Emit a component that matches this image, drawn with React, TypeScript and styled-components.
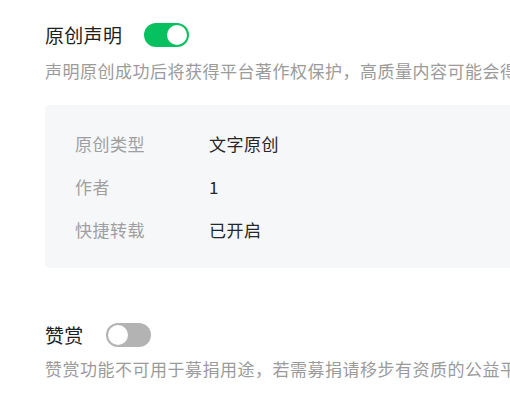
import React from "react";
import styled, { createGlobalStyle } from "styled-components";

const Global = createGlobalStyle`
  html, body {
    margin: 0;
    padding: 0;
    background: #ffffff;
    overflow: hidden;
  }
  body {
    font-family: "Noto Sans CJK SC", "Noto Sans", sans-serif;
  }
`;

const Page = styled.div`
  width: 900px;
  padding: 23px 0 0 45px;
  display: flex;
  flex-direction: column;
`;

const Section = styled.section<{ $gapTop?: number }>`
  display: flex;
  flex-direction: column;
  margin-top: ${(p) => p.$gapTop ?? 0}px;
`;

const TitleRow = styled.div`
  display: flex;
  align-items: center;
  gap: 22px;
  height: 24px;
`;

const Title = styled.span`
  font-size: 19px;
  line-height: 24px;
  letter-spacing: 0.3px;
  color: #1f1f1f;
  white-space: nowrap;
  margin-top: -1px;
`;

const Toggle = styled.span<{ $on: boolean }>`
  position: relative;
  display: inline-block;
  width: 45px;
  height: 24px;
  border-radius: 12px;
  background: ${(p) => (p.$on ? "#07c160" : "#b3b3b3")};
  &::after {
    content: "";
    position: absolute;
    top: 2px;
    left: ${(p) => (p.$on ? "23px" : "2px")};
    width: 20px;
    height: 20px;
    border-radius: 50%;
    background: #ffffff;
  }
`;

const Desc = styled.p<{ $mt: number }>`
  margin: ${(p) => p.$mt}px 0 0;
  font-size: 17px;
  line-height: 24px;
  letter-spacing: 0.5px;
  color: #9b9b9b;
  white-space: nowrap;
`;

const InfoBox = styled.div`
  margin-top: 22px;
  background: #f6f7f9;
  border-radius: 4px;
  padding: 17px 30px 17px;
  display: flex;
  flex-direction: column;
`;

const InfoRow = styled.div`
  display: grid;
  grid-template-columns: 134px 1fr;
  align-items: center;
  height: 43px;
  font-size: 17px;
  line-height: 24px;
  letter-spacing: 0.5px;
`;

const Label = styled.span`
  color: #9f9f9f;
`;

const Value = styled.span`
  color: #262626;
`;

const rows: [string, string][] = [
  ["原创类型", "文字原创"],
  ["作者", "1"],
  ["快捷转载", "已开启"],
];

export default function App() {
  return (
    <>
      <Global />
      <Page>
        <Section>
          <TitleRow>
            <Title>原创声明</Title>
            <Toggle $on />
          </TitleRow>
          <Desc $mt={12}>
            声明原创成功后将获得平台著作权保护，高质量内容可能会得到平台推荐
          </Desc>
          <InfoBox>
            {rows.map(([k, v]) => (
              <InfoRow key={k}>
                <Label>{k}</Label>
                <Value>{v}</Value>
              </InfoRow>
            ))}
          </InfoBox>
        </Section>
        <Section $gapTop={55}>
          <TitleRow>
            <Title>赞赏</Title>
            <Toggle $on={false} />
          </TitleRow>
          <Desc $mt={10}>
            赞赏功能不可用于募捐用途，若需募捐请移步有资质的公益平台发起募捐
          </Desc>
        </Section>
      </Page>
    </>
  );
}
